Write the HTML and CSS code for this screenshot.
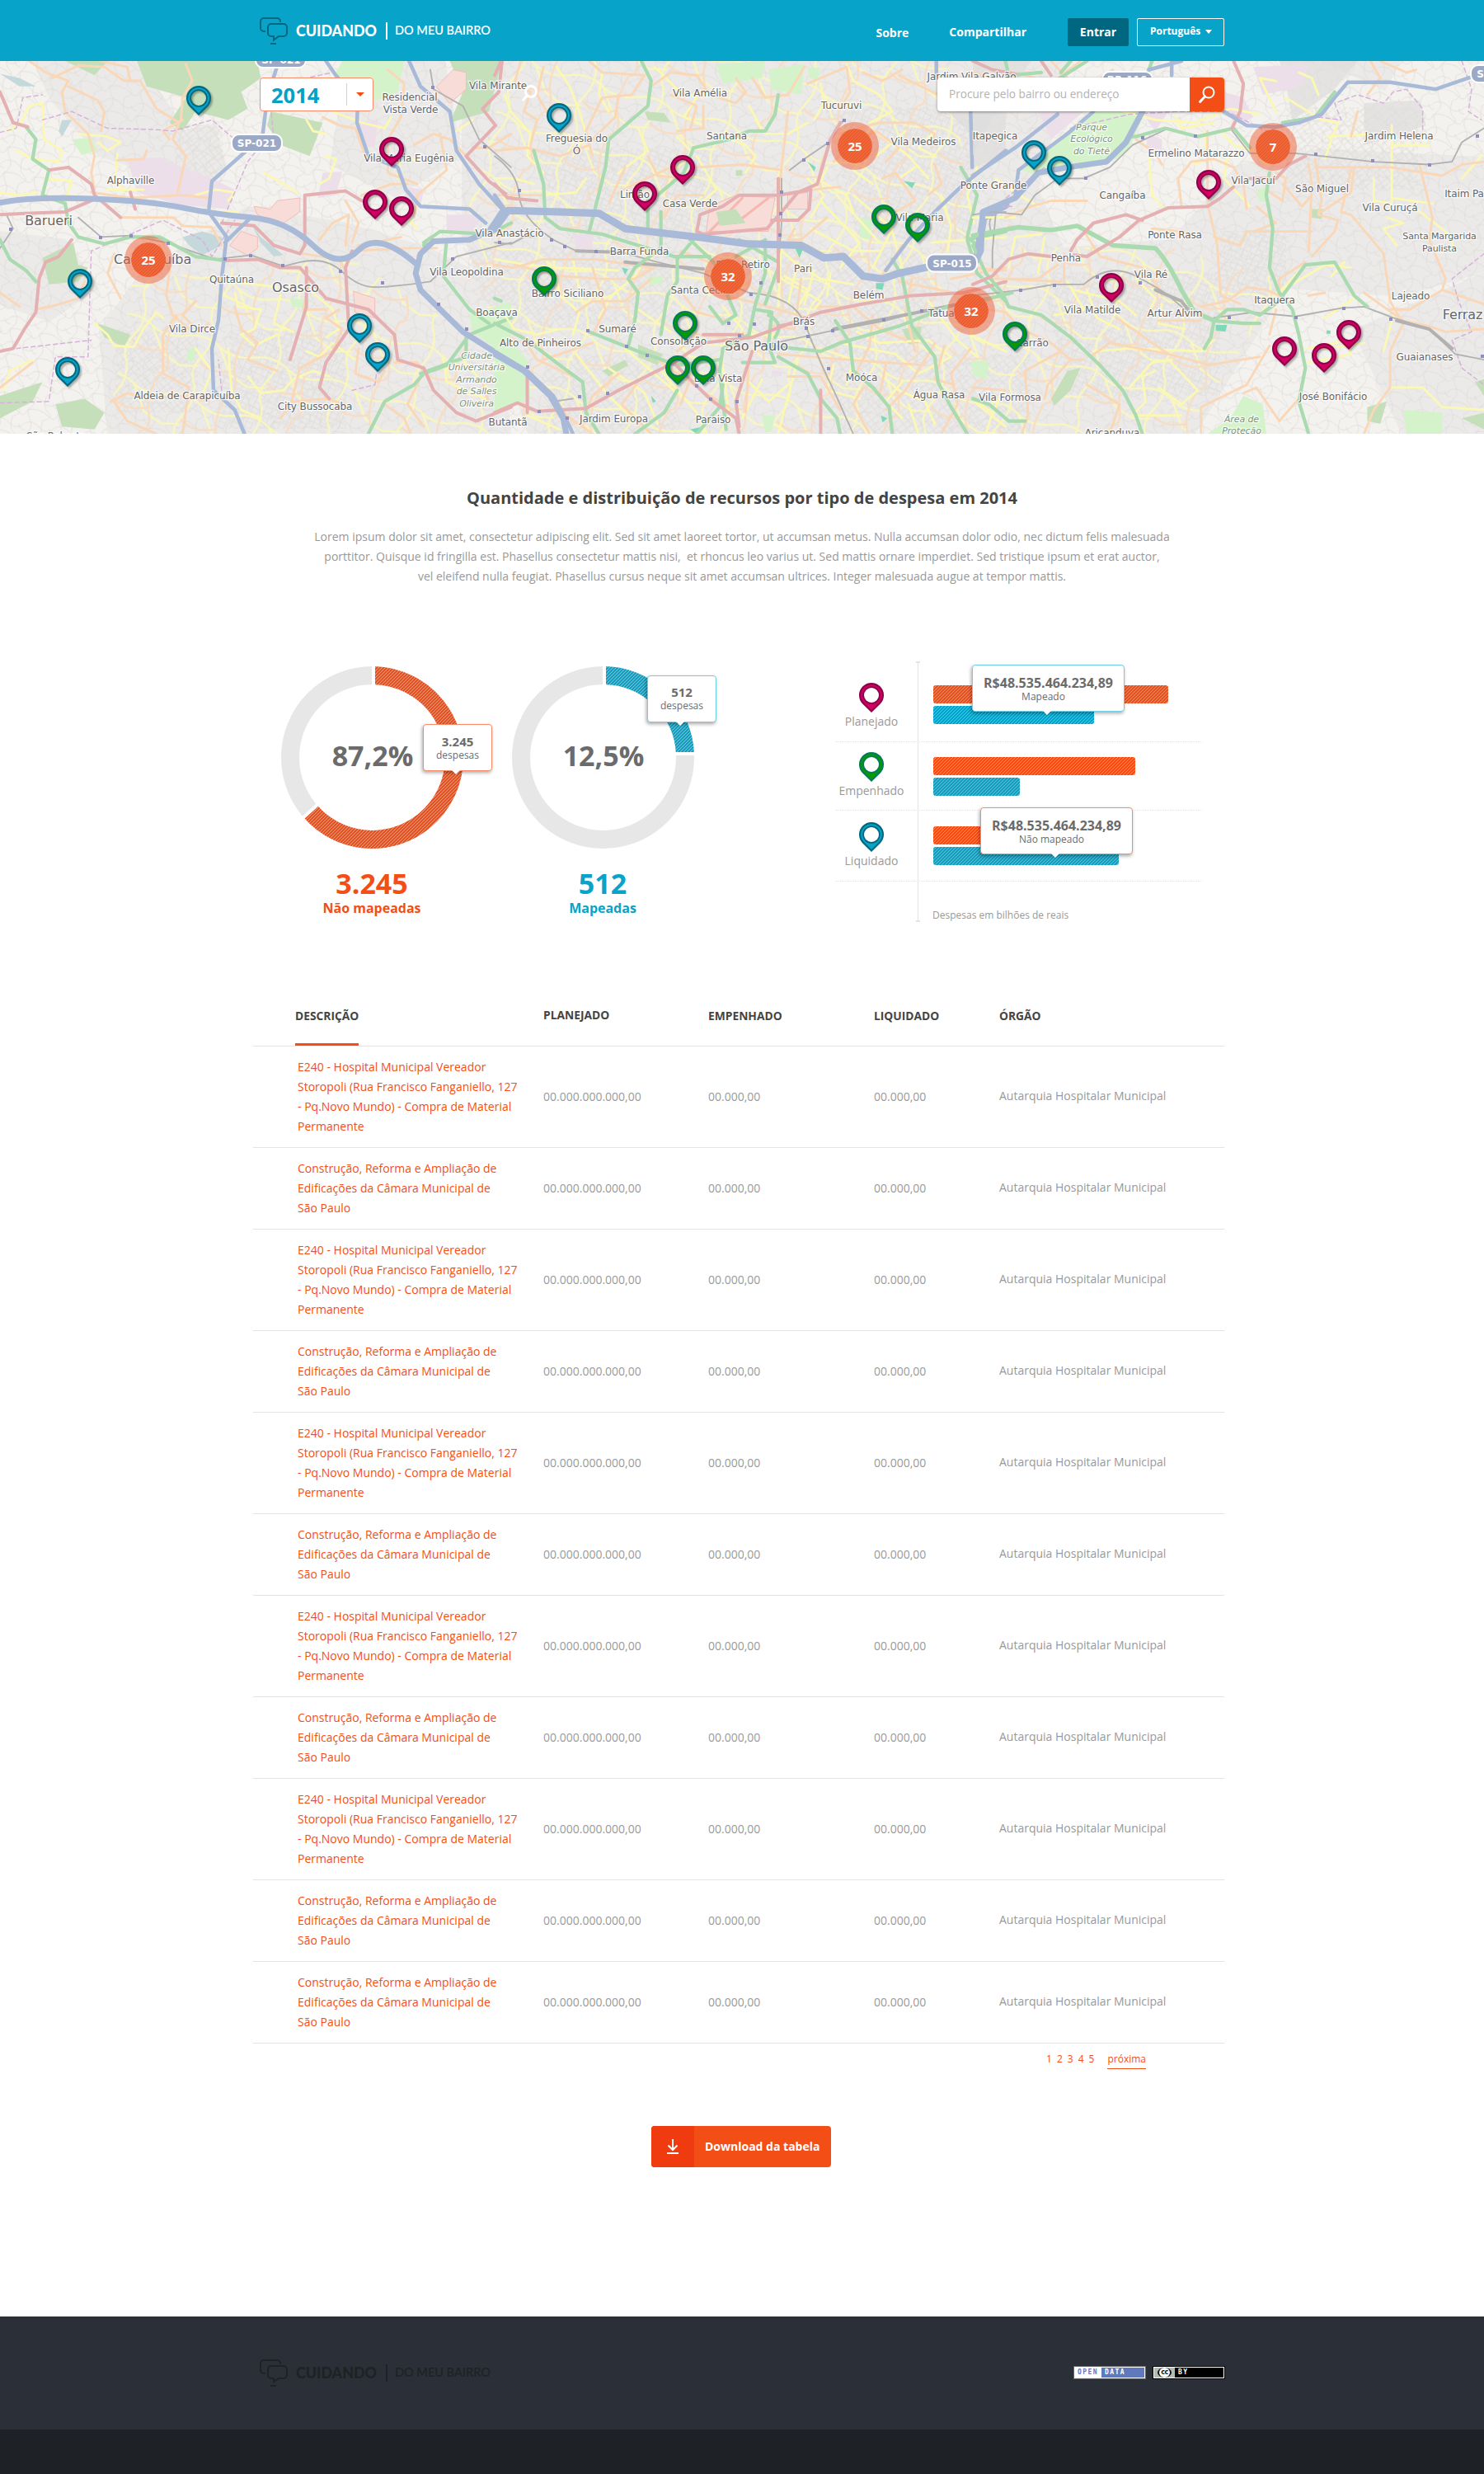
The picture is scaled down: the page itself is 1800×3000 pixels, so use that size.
FILE: index.html
```html
<!DOCTYPE html>
<html lang="pt-BR">
<head>
<meta charset="utf-8">
<title>Cuidando do Meu Bairro</title>
<link rel="stylesheet" href="styles.css">
</head>
<body>

<svg class="defs" width="0" height="0" aria-hidden="true">
  <defs>
    <symbol id="pin" viewBox="0 0 30 36">
      <path class="pin-edge" fill-rule="evenodd" d="M15 36 4 25.2A15 15 0 1 1 26 25.2ZM15 6a9 9 0 1 0 0 18 9 9 0 0 0 0-18Z"/>
      <path fill="currentColor" fill-rule="evenodd" d="M15 33 5.400 23.400A12.800 12.800 0 1 1 24.600 23.400ZM15 4.200a10.800 10.800 0 1 0 0 21.600 10.800 10.800 0 0 0 0-21.600Z"/>
    </symbol>
    <symbol id="logo" viewBox="0 0 284 36">
      <g class="logo-mark" fill="none" stroke-width="2">
        <path d="M25 6V5a4 4 0 0 0-4-4H5a4 4 0 0 0-4 4v8a4 4 0 0 0 4 4h2"/>
        <path d="M14 8H29a4 4 0 0 1 4 4v7a4 4 0 0 1-4 4H23L17 27.500V23H14a4 4 0 0 1-4-4V12a4 4 0 0 1 4-4Z"/>
        <path d="M13 32h7"/>
      </g>
      <rect class="logo-text" x="153" y="6" width="2" height="21"/>
      <text class="logo-text logo-strong" x="44" y="23" textLength="98" lengthAdjust="spacingAndGlyphs">CUIDANDO</text>
      <text class="logo-text logo-light" x="164" y="21" textLength="116" lengthAdjust="spacingAndGlyphs">DO MEU BAIRRO</text>
    </symbol>
    <pattern id="stripes" width="4" height="4" patternUnits="userSpaceOnUse">
      <path d="M-1 1 1-1M0 4 4 0M3 5 5 3" stroke="#fff" stroke-opacity=".5" stroke-width=".9"/>
    </pattern>
  </defs>
</svg>

<header class="topbar">
  <div class="container topbar-inner">
    <svg class="logo" width="284" height="36"><use href="#logo"/></svg>
    <nav class="nav">
      <a class="nav-link about">Sobre</a>
      <a class="nav-link share">Compartilhar</a>
      <a class="button-login">Entrar</a>
      <a class="button-lang">Português <span class="caret"></span></a>
    </nav>
  </div>
</header>

<section class="map">
  <svg class="map-canvas" width="1800" height="452" viewBox="0 74 1800 452">
    <defs>
      <pattern id="grid-a" width="15" height="13" patternUnits="userSpaceOnUse" patternTransform="rotate(24)"><path d="M0 1H15M0 7H9M1 0V13M9 3V13M12 0V7"/></pattern>
      <pattern id="grid-b" width="17" height="14" patternUnits="userSpaceOnUse" patternTransform="rotate(-38)"><path d="M0 2H17M4 8H17M3 0V14M10 2V14"/></pattern>
      <pattern id="grid-c" width="37" height="31" patternUnits="userSpaceOnUse" patternTransform="rotate(9)"><path d="M0 5Q9 1 18 9T37 5M4 0Q10 9 4 16T4 31M20 0Q17 15 25 20T20 31M0 20Q15 16 25 24T37 20M29 8Q31 15 37 14"/></pattern>
      <pattern id="avenues" class="avenues" width="86" height="74" patternUnits="userSpaceOnUse" patternTransform="rotate(18)"><path d="M0 20Q20 12 40 22T86 20M24 0Q32 20 22 40T24 74M40 22 62 50 86 58M0 58 22 52"/><path class="alt" d="M66 0Q58 30 68 50T66 74M22 46Q40 58 66 44"/></pattern>
    </defs>
    <rect class="land" y="74" width="1800" height="452"/>
    <g class="urban">
      <path d="M40 74H170L220 150 200 215 120 190 60 120ZM215 160 260 150 275 200 240 240 190 215ZM300 250 420 270 520 300 600 340 620 526H130L120 400 170 330ZM420 74H540L560 190 480 240 400 200ZM560 74H1130V526H640L600 400 560 280Z"/>
      <path d="M1130 74H1300L1260 230 1290 300 1420 290 1500 200 1600 180 1800 190V330L1700 360 1560 350 1450 526H1130Z"/>
      <path d="M0 280 80 290 120 350 60 390 0 370ZM1640 400 1800 330V526H1700ZM1600 74H1700L1680 110Z"/>
    </g>
    <rect class="streets" y="74" width="1800" height="452" fill="url(#grid-c)"/>
    <g class="streets-fill">
      <path fill="url(#grid-a)" d="M640 180H870V290H690ZM1000 130H1180V290H1040ZM280 400H420V520H260ZM1260 330H1480V480H1300ZM1480 280H1560V360H1480Z"/>
      <path fill="url(#grid-b)" d="M850 300H1130V430H900ZM560 300H820V400H600ZM210 150H270V230H215ZM1560 130H1720V230H1560ZM140 400H240V500H140ZM1000 430H1250V526H1020ZM660 430H820V526H660Z"/>
    </g>
    <path fill="url(#avenues)" d="M160 340 420 310 560 400 600 526H130ZM620 74H1150L1180 260 1150 526H640L600 400 560 280ZM1200 300 1420 300 1560 340 1440 526H1150Z"/>

    <g class="roads" transform="matrix(.3954 0 0 .3381 0 0)">
      <path class="forest" d="M420 219H790L800 280 740 330 760 390 700 430 600 400 560 470 520 440 570 350 450 310ZM300 1160 400 1200 380 1245 320 1210ZM130 925 225 870 240 950 270 960 240 1010 150 1020ZM170 1450 260 1430 320 1480 290 1540 190 1530ZM0 1420 130 1370 100 1440 0 1500ZM830 400 990 440 950 560 860 520 820 450ZM1380 219H1540L1500 400 1380 440 1420 330ZM200 219 330 219 290 270Z"/>
      <path class="park" d="M1050 219H1240L1220 330 1130 370 1060 350 1030 260ZM220 500 280 495 300 540 250 555ZM1440 1130 1568 1080V1290L1450 1190ZM580 1250 605 1245 590 1300 570 1290ZM890 1070 950 1075 940 1105 895 1100Z"/>
      <path class="industry" d="M390 570 490 565 560 600 650 640 720 680 700 750 550 735 420 690ZM990 620 1050 615 1030 700 975 710ZM1240 670 1300 680 1290 740 1250 730ZM1370 770 1480 770 1440 850 1370 830ZM1100 440 1160 430 1150 520 1120 530Z"/>
      <path class="military" d="M780 740 830 750 850 720 920 710 920 760 870 800 820 790 790 770ZM705 880 740 830 790 850 790 890 760 915ZM1340 310 1390 250 1430 260 1430 320 1380 370ZM1085 1045 1150 1070 1150 1140 1090 1120Z"/>
      <path class="water" d="M560 850 620 830 680 850 680 880 620 915 580 880ZM770 800 800 850 870 915 840 920 800 870ZM0 265 60 280 110 310 60 310ZM190 430 220 430 190 490 180 470Z"/>
      <g class="yellow">
        <path d="M20 470 60 450 90 380 130 370 135 500 190 540 180 580 100 570 50 540M240 480 330 490 370 510 330 540 300 510M360 550 355 630 380 690M330 680 440 680M660 640 700 600 740 560M520 740 620 760 730 760M600 700 660 680 720 690 700 720M0 690 60 700 110 690M810 620 870 660 910 690M980 660 1010 640 1030 570 1000 560M940 430 960 470 1000 480"/>
        <path d="M290 1160 330 1200 350 1240 410 1245 440 1180 480 1120 500 1140M720 1050 730 1100 800 1110 780 1180 740 1200 780 1240 850 1200M650 1000 850 1030M670 1050 780 1110M860 1060 840 1160 900 1190M960 1050 1020 1110 1040 1180 1000 1210M1090 1290 1020 1230 980 1280 940 1260M760 1350 800 1410 870 1400 900 1360 960 1330 1010 1350M620 1420 650 1330 600 1250M700 1250 710 1400 740 1470 800 1500M1290 580 1230 560 1220 640M1280 820 1250 780M1360 1290 1370 1370 1430 1400 1490 1430M1420 1290 1500 1400 1568 1420M100 1290 30 1330 10 1400M1020 400 1110 440 1180 460 1200 420M140 640 220 650 200 720M1450 430 1400 470"/>
      </g>
      <g class="orange">
        <path d="M90 219 140 260 210 290 190 330 200 400 270 480 290 560 280 620 290 680M160 280 240 235 320 240 380 290 430 290 480 390 550 440 530 500 570 560 545 690M210 310 300 360 320 400 310 470M280 690 400 710 560 700 640 710M360 575 440 570 450 540M370 780 530 780 560 810 650 815 680 880M520 500 500 470 560 430M400 290 390 240 310 219M570 230 590 290 560 350 555 430"/>
        <path d="M990 420 1040 450 1090 460 1120 560 1190 590M1190 250 1240 300 1230 420 1190 500 1190 620 1280 660M1270 520 1330 480 1380 500 1430 560M1350 480 1370 610 1280 700 1270 780M1110 700 1200 660 1250 660M1060 720 1100 800 1080 870M980 860 1020 800 1070 770 1060 880M930 910 1040 930 1060 970M1080 900 1260 890 1340 890M1230 850 1150 870 1100 880M490 880 520 970 510 1060 530 1130 580 1180M350 910 330 980 370 1070M0 1050 60 1100M110 1110 170 1095 240 1070 260 1010M540 1130 500 1200 500 1340 580 1390 560 1556M600 1080 560 1130 610 1190 640 1160M720 1100 740 1180 790 1230 760 1290 850 1330M1040 1110 1000 1140 1050 1180 1020 1260 920 1320 890 1460M860 1500 900 1440 1000 1430 1060 1450M340 1440 390 1410 450 1430 560 1420 640 1440M350 1440 390 1510 480 1556M0 1390 100 1300M1100 1250 1090 1340 1160 1370 1180 1330M1210 1300 1280 1300 1300 1330M1180 1450 1240 1500 1260 1556M1480 1370 1500 1450M1300 1330 1250 1450 1300 1530M950 1000 930 1110 1000 1110M1568 480 1500 530 1450 530"/>
      </g>
      <g class="boundary">
        <path d="M0 475 50 460 70 350 130 340M130 430 220 400 330 460 480 465 530 470 650 430 720 500M680 800 760 580 800 520M840 500 830 380 860 300 1020 260M0 1445 150 1440 170 1280 270 1280 280 900 500 790 620 860 650 920 720 790M50 1250 280 1220M680 1400 670 1290M1080 1400 1150 1380 1160 1300"/>
      </g>
      <g class="rail">
        <path d="M240 780 310 850 400 845 510 870 660 930 770 915 870 955 920 940Q1000 920 1050 975T1150 1030T1320 1010L1400 920 1568 870M1320 250 1330 320 1420 380 1470 500 1568 600M0 890 40 820 20 770"/>
      </g>
      <g class="green">
        <path d="M80 455 110 500 100 570 150 610 130 700 200 730 210 800 240 850 320 875 400 850 490 850 600 920 690 935M0 860 30 930 80 970 110 1010M1300 880 1370 860 1360 990 1440 1110 1500 1160M1568 1140 1440 1200 1370 1310 1300 1340 1270 1380 1180 1440 1130 1556M1290 1340 1430 1280 1430 1200M1300 870 1350 830 1500 840 1568 800"/>
      </g>
      <g class="red">
        <path d="M0 330 40 440 85 455M150 610 210 600 280 660 290 700 370 780M0 770 80 765 200 760 280 720M220 860 180 920 140 940 120 1000 110 1120 75 1180 40 1250 0 1260M680 800 780 810 840 880 920 910 935 880 935 700 1060 685 1110 720M690 935 790 930 860 960 920 960 1000 1070 1130 1110 1210 1200 1220 1290 1300 1320 1330 1400 1400 1480 1460 1510 1568 1460M1080 900 1060 960 1070 1180 1000 1300 980 1390 1010 1430M940 960 940 1100 890 1290M1540 219 1530 330 1480 390 1520 450 1430 560 1500 650 1568 710M400 690 415 750"/>
      </g>
      <g class="blue">
        <path class="wide" d="M0 727Q100 705 280 713T560 745 770 780 960 880 1100 897 1280 950"/>
        <path d="M855 219 820 350 805 490 650 650 640 760 695 850 680 1000 670 1150 650 1250 655 1400 720 1470 750 1556M770 780 690 870M1000 219 1030 270 1098 360 1095 440 1130 560 1220 600 1245 680 1290 740 1440 750 1490 800M1255 219 1290 310 1380 400 1400 540 1470 660 1540 750 1568 760"/>
        <path class="wide" d="M1540 760 1500 830 1440 860 1330 865 1290 910 1275 980 1290 1040 1420 1190 1568 1300"/>
      </g>
    </g>

    <g class="roads" transform="matrix(.3954 0 0 .3381 600 0)">
      <path class="forest" d="M460 400 520 405 540 440 470 430ZM440 1235 515 1270 500 1310 440 1280ZM1250 1180 1310 1170 1300 1230 1270 1235ZM330 1330 400 1290 410 1310 350 1350ZM740 610 760 610 760 630 740 630Z"/>
      <path class="park" d="M680 230 830 219 820 280 700 300ZM840 250 950 230 940 340 850 320ZM0 1160 100 1290 110 1430 0 1480ZM960 240 1000 245 990 290 965 280ZM1460 1300 1510 1290 1510 1360 1470 1350ZM470 990 520 990 510 1020 470 1020ZM1120 780 1160 790 1150 860 1120 850ZM820 1490 860 1490 850 1550 830 1550Z"/>
      <path class="teal" d="M920 885 945 895 935 925ZM1170 1015 1195 1015 1190 1040 1170 1035ZM1255 650 1290 655 1280 675ZM390 960 410 965 400 985ZM960 580 985 600 980 615ZM600 1540 640 1530 620 1556ZM1185 1490 1205 1500 1190 1515ZM480 1420 495 1440 485 1445Z"/>
      <path class="military" d="M660 740 740 700 860 710 840 830 650 830ZM900 700 960 690 960 750 900 750Z"/>
      <path class="runways" d="M660 830 760 710M740 800 840 710"/>
      <path class="forest" d="M680 760 740 750 770 800 690 810Z"/>
      <path class="industry" d="M240 840 300 840 300 890 250 890ZM850 1330 880 1330 880 1350 850 1350Z"/>
      <path class="gray" d="M1390 400 1568 400V560L1470 600 1460 480Z"/>
      <g class="yellow">
        <path d="M30 340 50 400 110 480 100 560 150 620M190 240 230 310 260 400 280 480 240 560M330 260 320 340 350 400M490 240 560 320 620 350 580 420 640 450M600 560 560 600 520 690M800 430 830 480 900 480 960 440M1000 300 1010 370 980 430M1080 230 1100 290 1180 340 1220 400 1150 440M620 560 680 680 640 720M560 490 600 540 580 640M0 640 60 640 120 660M1020 600 1000 650 1080 700 1100 760M1130 560 1100 610 1160 660M700 490 770 520 800 560 770 620M1180 480 1270 560 1330 640M1260 470 1170 560M1290 600 1240 640M820 470 800 420 780 380M1350 470 1300 530 1350 560M150 700 250 690 280 640M440 460 470 540 380 620M0 930 100 950 200 960 380 970M180 930 200 1060 260 1120 240 1200"/>
        <path d="M240 930 270 1090 360 1060M480 900 430 990 360 1060 320 1140M560 990 640 1000 660 1060M700 1100 760 1180 740 1240M860 880 920 940 1000 1000 1100 1020M880 1000 1000 1080 980 1110M960 640 1010 700 970 780M1000 720 1120 870 1060 960M1050 700 1180 870M970 820 1100 900 1180 900M1100 700 1220 820 1160 960M1220 830 1250 960M880 860 870 1100M890 990 960 1040 920 1120M930 940 900 1090M980 970 950 1090M1030 980 1020 1060M440 1110 540 1190M760 1200 860 1200M550 1210 600 1280 700 1290M510 1330 620 1480 650 1556M400 1250 560 1410M350 1320 460 1410 500 1520M250 1270 350 1420 420 1500M100 1490 200 1540M700 1320 720 1500 690 1556M820 1360 760 1500M780 1370 840 1440 900 1380M930 1290 900 1420 870 1556M1080 1380 1100 1290 1000 1250M1060 1230 1230 1270 1300 1340 1400 1280M1110 1190 1180 1230 1330 1220 1400 1280M1040 1310 1020 1400 1120 1430M1180 1340 1240 1400 1320 1440 1350 1520M1330 1080 1420 1220 1480 1280M1250 1370 1200 1440 1250 1500M1480 1100 1460 1200 1568 1260M1480 600 1450 700 1470 800M1370 700 1400 810 1390 900M1340 870 1568 850M30 1130 60 1180 130 1200 200 1180M860 1520 900 1556M1270 1450 1300 1556M1480 1450 1568 1530"/>
      </g>
      <g class="orange">
        <path d="M80 219 60 300 110 330 90 400 130 430 110 520M150 240 130 340 160 400M0 540 100 530 200 560 290 520M290 219 330 260 460 270 420 340 330 350 280 470 300 560M380 340 370 420 300 500M480 310 540 260 620 270 660 340 740 370 770 330 740 280M540 340 620 380 600 460M640 380 640 460 560 470M790 280 830 350 900 340 950 240M620 600 760 590 880 610M960 300 1080 240 1090 330 1060 390M1250 250 1190 290 1130 260M1240 270 1360 340 1400 330 1480 260M1060 480 1180 440 1290 440 1350 480 1340 530M900 400 880 600 870 740M1120 500 1170 470 1240 530 1200 580M1190 640 1230 620 1290 720 1230 760M1040 580 1090 520M980 680 1060 670M1330 700 1370 660 1350 590M640 700 560 700 520 780M470 560 500 630 580 640M400 600 350 730M0 700 150 700M380 690 430 660 540 600"/>
        <path d="M0 950 60 960 150 930 310 930 480 960M60 950 200 990 330 1000 430 1000M300 960 340 1110 300 1200M430 1000 490 960M250 1120 300 1080 400 1080 480 1000M570 900 700 960 750 1040M580 1060 620 1120 720 1150M660 1050 780 1080 960 1140M560 1260 620 1200 700 1210 750 1230M870 870 960 880 1020 920M1000 1100 1100 1100 1180 1180 1260 1220M870 1270 1080 1290 1200 1300 1320 1310M850 1170 920 1180M940 1000 920 1180M1020 780 940 860 900 860M1160 1130 1150 1240 1100 1360M1280 1000 1260 1120 1290 1260M1350 1230 1320 1290 1260 1400 1200 1470M1460 1250 1400 1340 1420 1450 1370 1556M1400 1000 1568 960M1240 1010 1450 1060M1470 960 1568 970M80 1200 130 1290 240 1350M150 1290 300 1230M170 1400 220 1490 300 1556M380 1340 300 1420 280 1480M440 1370 390 1450 480 1556M500 1290 660 1420 720 1460M620 1300 570 1450M780 1300 770 1480M900 1350 1000 1350 1060 1470M980 1240 1020 1360M1130 1390 1100 1450 1150 1556M1200 1310 1180 1420M1250 880 1180 1000M920 820 900 860M1380 1240 1350 1360 1410 1380"/>
      </g>
      <g class="rail">
        <path d="M0 560Q70 620 75 700T180 860L250 900 390 905 500 940 640 980 780 1050Q920 1060 955 1170T1040 1400L1100 1556M880 640V800L870 960M905 610 950 570 1025 510 1070 430M0 870 50 875 90 850 130 850M1525 840Q1500 760 1568 760M180 1440 240 1430M820 1240 960 1205 1040 1185 1200 1150 1310 1115 1500 1070 1568 1060"/>
        <path class="heavy" d="M250 900 390 905M400 940 640 965M1040 1180 1430 1090"/>
      </g>
      <g class="green">
        <path d="M450 219 480 290 470 380 350 500 340 600 310 740 290 830M870 340 860 410 830 470 780 470 720 500 610 530 580 620 500 700M470 710V820M510 760V890L430 960 410 1000 440 1050 430 1150 410 1240M120 540 150 660 155 780 200 820 330 840 550 920 660 920M610 860 560 930 560 1010 530 1060 510 1200M600 860 680 950 700 1020 740 1130 700 1160 660 1100M750 860 870 940M740 920 830 860 830 980 800 1090 780 1200 700 1250 690 1330 710 1540M800 1110 850 1120 840 1240 860 1300 760 1300M840 1130Q890 1160 860 1210M870 960 830 1090M840 1240 1000 1260 1060 1230 1240 1170 1390 1100M1045 1150 1090 1230 1100 1330 1160 1390 1210 1460 1220 1556M870 1280 960 1340 1000 1430 1050 1500 1060 1556M1220 930 1250 990 1280 1170 1350 1280 1360 1370 1400 1460 1450 1556M1450 860 1568 830M1450 860 1480 980 1568 1080M1430 600 1480 700 1450 850 1490 890M290 1190 440 1260 560 1310 690 1290M0 1160 100 1220 200 1310 270 1370 280 1480 320 1556M560 1400 520 1480 430 1556M700 1380 690 1460 620 1556M0 1070 20 1080"/>
      </g>
      <g class="red">
        <path d="M0 660 40 710 130 720M20 219 0 270M1060 440 1030 500 990 660 930 690 880 760 835 820 640 840 620 830 630 770 700 740 750 700 870 700 970 680 965 750 930 790 850 790M870 640 870 1010M0 1480 70 1445 130 1475 280 1465 380 1400 550 1300 640 1230 790 1210 1000 1120 1130 1090 1280 1060 1440 1050 1568 1010M540 1290 590 1350 660 1430 740 1500 750 1556M790 1260 740 1440 750 1530M870 1170 960 1150M100 1340 100 1480M1000 1400V1556M640 1200 760 1200"/>
      </g>
      <g class="blue">
        <path class="river" d="M0 820 40 755 200 760 320 765 400 820 620 850 780 875 940 880 1010 925 1070 920 1130 990 1190 1000 1240 980 1360 950 1480 920 1500 780 1568 735"/>
        <path d="M0 700 30 750M1200 970 1270 860 1350 760 1430 670 1568 540M1355 219V270M1460 400 1465 600M0 1260 100 1330 180 1420 230 1530 240 1556"/>
        <path class="wide" d="M0 1270 90 1330 170 1420 210 1500 220 1556"/>
      </g>
    </g>

    <g class="roads" transform="matrix(.3954 0 0 .3381 1180 0)">
      <path class="gray" d="M0 219H180L140 280 60 420 0 560ZM940 219 1180 219 1110 320 980 430 960 300ZM1200 370 1370 360 1390 450 1290 490 1200 520Z"/>
      <path class="industry" d="M540 480 580 500 580 540 530 530ZM740 320 830 350 860 420 830 440 740 400ZM200 400 340 400 240 500ZM860 240 1030 230 1010 310 890 340ZM520 410 600 400 560 470Z"/>
      <path class="park" d="M380 400 530 400 480 530 440 570 330 610 310 580 200 630 150 610Z"/>
      <path class="park" d="M830 1420 890 1450 900 1556H720L790 1500ZM1320 1470 1440 1480 1440 1556H1330ZM870 680 900 670 910 720 880 725ZM0 1290 50 1310 40 1350 10 1350Z"/>
      <path class="forest" d="M290 1330 330 1320 300 1400 250 1455 240 1430ZM1210 1460 1270 1440 1250 1520 1210 1510ZM1040 750 1075 750 1070 785 1040 780ZM1500 1500 1568 1480V1540ZM1540 1370 1568 1360V1420Z"/>
      <path class="teal" d="M745 1165 780 1165 775 1190 745 1185ZM1085 1185 1097 1185 1097 1197 1085 1197Z"/>
      <g class="yellow">
        <path d="M280 340 400 380 560 430 680 440 790 390 880 410M620 420 640 460 740 440M760 470 800 520 860 540 900 590M930 400 880 280 930 290M960 350 1070 430 1120 440 1100 500 1080 570M1000 260 1040 280 1060 340M1090 490 1230 480M1285 450 1285 720M1285 520 1400 520M1285 710 1410 730M1270 780 1320 800 1260 820 1300 880M1350 740 1460 840 1480 900M1230 640 1230 720 1285 730M780 560 770 640 850 740M710 470 720 570 680 590M540 560 550 700 580 740M0 780 130 780M70 640 130 690 200 740M210 840 130 850 110 960M220 850 200 980M350 1040 380 1140 450 1180M310 1040 450 1080 500 1130M290 1010 340 1110 250 1130M500 1000 560 1070 540 1120M580 1090 570 1160 650 1180M610 1290 550 1300 480 1390M560 1330 520 1350 530 1440 490 1490 640 1490M600 1290 690 1400 640 1450 570 1390M1010 1250 1080 1250 1200 1230M1030 1300 1160 1270 1150 1220 1030 1250M1140 940 1100 990M920 1060 1080 950 1160 960M1170 1070 1080 1140M1260 1260 1290 1130M1020 950 930 1060M1280 1390 1380 1390 1440 1460 1568 1470M1560 560 1500 640M0 1430 60 1480 40 1556M90 1400 60 1490M370 1260 480 1250 700 1260 740 1220"/>
      </g>
      <g class="orange">
        <path d="M0 260 120 300 100 360M240 219 330 330 430 250M140 260 240 300 330 219M500 500 560 550 580 590M640 740 630 640 670 580 740 570 800 600 830 660 840 750M720 470 720 730 750 880 760 1060 820 1090M740 850 820 880 840 830 1040 830M550 820 640 830 700 850M100 780 180 740 240 720 350 720M110 810 220 830M330 810 390 920 520 960 570 1030 580 1060M280 910 280 1020M60 960 80 1000 270 1010M30 1000 200 1000 260 950M700 1100 780 1080 840 1030 900 1040 940 1060M900 680 950 720 960 640 930 620M950 660 1010 740 1040 700M1030 590 1040 660 1030 900M1050 570 1070 720 1060 770 1120 790 1110 830 1040 920M1070 760 1160 690 1170 600M1060 600 1280 600 1440 630 1500 590 1568 580M1160 610 1130 760 1160 770 1260 910 1280 1080 1320 1160 1280 1260 1280 1390 1230 1470 1200 1556M1370 590 1410 780 1400 860 1450 1000 1440 1040 1340 1110 1280 1110M1220 219 1250 280 1210 340M1250 219 1330 260 1360 250M1440 1040 1568 1090M1200 1050 1320 1150 1400 1170 1450 1190 1568 1180M940 1070 940 1000 1020 940M1030 1060 1080 1050M60 1060 30 1100M0 1100 100 1120 150 1180 240 1230 300 1290 340 1290M300 1290 230 1380 220 1430M270 1260 160 1330 170 1490 150 1556M360 1280 420 1230 600 1270 730 1310M440 1140 600 1270M570 1150 700 1150M350 1380 450 1450 420 1556M830 1410 870 1390 940 1510 1000 1430M720 1310 880 1280M700 1556 700 1460 840 1380 910 1240M0 1390 100 1400M930 1110 910 1200M870 740 930 800 860 830M1180 400 1160 490"/>
      </g>
      <g class="boundary">
        <path d="M120 740 70 740 220 600M300 460 480 410 620 400 780 400 900 470 1060 420M1060 420 1130 430 1110 370 1180 340 1260 370 1290 330 1330 320 1380 390 1380 480 1320 480M1500 219 1530 320 1520 400 1560 430M1568 910 1470 1000 1490 1080 1530 1190 1470 1220M1470 1220 1500 1320 1568 1380"/>
      </g>
      <g class="rail">
        <path d="M0 770 60 760 150 770 190 700 260 640 340 640 420 600 490 520 600 460 680 490 790 460 850 550 990 550 1230 580 1400 590 1470 580 1500 510 1568 460M0 1060 150 1040 250 1020 340 1020Q420 940 500 990T600 1060 650 1110M740 1140 860 1120 990 1135 1130 1105 1200 1100 1290 1140 1400 1180 1480 1270 1568 1290M70 770 60 900 60 960"/>
        <path class="heavy" d="M560 1040 640 1080 660 1110M1300 1150 1400 1180 1470 1250"/>
      </g>
      <g class="green">
        <path class="wide" d="M0 845 140 815 240 825 320 810 430 880 560 890Q600 940 640 1040L680 1120 740 1150"/>
        <path d="M100 219 110 270 210 260M240 300 350 219M270 260 300 219M480 490 500 490 590 460 690 490 800 460 850 530M910 620 900 700 920 820 910 960 940 1050 980 1110 1000 1200 1020 1320 1000 1440 1030 1556M950 1060 1020 950 1110 940 1170 1060 1210 1100M740 1150 780 1110 830 1110 880 1130 940 1080M740 1150 830 1160 880 1160M740 1150 730 1210 710 1250M0 880 40 980 90 1050 110 1100 210 1130 300 1210 390 1310 460 1400 500 1490 520 1556M950 440 1050 420 1110 330M20 1080 120 1050M0 1430 50 1450 110 1510 160 1510M550 219 530 280 400 280"/>
      </g>
      <g class="red">
        <path d="M0 219 60 250 130 265M210 219 240 270M800 219 830 300 820 400 795 460M1020 560 970 590 930 640 850 640M800 670 760 710 720 740 600 745 510 790 450 850 350 920 310 915M520 790 470 770 370 800 320 860 300 900M240 920 170 910 110 930 60 990 0 1020"/>
      </g>
      <g class="blue">
        <path d="M0 630 130 530 260 410M130 700 140 610 290 480 370 400M540 250 640 219M610 219V270M770 400 840 450 930 455 1000 440 1070 410 1110 350 1150 295 1280 295 1420 320 1568 260"/>
        <path class="wide" d="M0 960 25 900 30 760 130 710 200 620 290 600 410 580 470 510 520 400"/>
      </g>
    </g>

    <g class="stations">
      <path d="M11 276h4v4h-4zM120 286h4v4h-4zM157 284h4v4h-4zM202 293h4v4h-4zM271 312h4v4h-4zM302 308h4v4h-4zM341 320h4v4h-4zM411 327h4v4h-4zM462 341h4v4h-4zM547 312h4v4h-4zM604 292h4v4h-4zM530 367h4v4h-4zM523 104h4v4h-4zM586 176h4v4h-4zM564 397h4v4h-4zM628 229h4v4h-4zM667 289h4v4h-4zM683 297h4v4h-4zM721 303h4v4h-4zM711 399h4v4h-4zM758 418h4v4h-4zM783 429h4v4h-4zM735 475h4v4h-4zM701 479h4v4h-4zM638 443h4v4h-4zM652 497h4v4h-4zM686 505h4v4h-4zM909 355h4v4h-4zM921 341h4v4h-4zM913 391h4v4h-4zM895 405h4v4h-4zM882 390h4v4h-4zM860 482h4v4h-4zM892 485h4v4h-4zM843 466h4v4h-4zM976 396h4v4h-4zM978 406h4v4h-4zM1003 445h4v4h-4zM1008 399h4v4h-4zM1070 386h4v4h-4zM1116 375h4v4h-4zM973 192h4v4h-4zM1002 172h4v4h-4zM1022 144h4v4h-4zM946 231h4v4h-4zM945 257h4v4h-4zM944 283h4v4h-4zM1384 165h4v4h-4zM1448 163h4v4h-4zM1315 214h4v4h-4zM1594 185h4v4h-4zM1663 193h4v4h-4zM1732 198h4v4h-4zM1790 163h4v4h-4zM1236 350h4v4h-4zM1277 344h4v4h-4zM1329 334h4v4h-4zM1381 341h4v4h-4zM1489 383h4v4h-4zM1570 383h4v4h-4zM1628 372h4v4h-4zM1685 385h4v4h-4zM1796 430h4v4h-4z"/>
    </g>
    <g class="shield">
      <rect x="281" y="163" width="61" height="21" rx="9"/><text x="311.500" y="178">SP-021</text>
      <rect x="310" y="61" width="61" height="21" rx="9"/><text x="341" y="77">SP-021</text>
      <rect x="1124" y="308.500" width="61" height="21" rx="9"/><text x="1155" y="323.500">SP-015</text>
      <rect x="1337" y="87" width="61" height="21" rx="9"/><text x="1367" y="101">BR-116</text>
      <rect x="1784" y="79" width="61" height="21" rx="9"/><text x="1815" y="94">SP-066</text>
    </g>
    <g class="labels">
      <text x="497" y="121.500">Residencial</text><text x="498" y="137">Vista Verde</text><text x="604" y="108">Vila Mirante</text>
      <text x="496" y="196">Vila Maria Eugênia</text><text x="158.500" y="223">Alphaville</text>
      <text x="281" y="343">Quitaúna</text><text x="233" y="403">Vila Dirce</text><text x="227" y="484">Aldeia de Carapicuíba</text>
      <text x="382" y="497">City Bussocaba</text><text x="566" y="334">Vila Leopoldina</text><text x="618" y="287">Vila Anastácio</text>
      <text x="602.500" y="383">Boaçava</text><text x="655.500" y="420">Alto de Pinheiros</text><text x="616" y="516">Butantã</text><text x="68" y="533">São Roberto</text>
      <text x="699.500" y="172">Freguesia do</text><text x="699.500" y="187">Ó</text><text x="849" y="117">Vila Amélia</text><text x="881.500" y="168.500">Santana</text>
      <text x="1020.500" y="132">Tucuruvi</text><text x="1178.500" y="97">Jardim Vila Galvão</text><text x="1120" y="176">Vila Medeiros</text>
      <text x="1207" y="168.500">Itapegica</text><text x="1205" y="229">Ponte Grande</text><text x="770" y="240">Limão</text><text x="837" y="251">Casa Verde</text>
      <text x="1115.500" y="267.500">Vila Maria</text><text x="775.500" y="309">Barra Funda</text><text x="901" y="324.500">Bom Retiro</text><text x="974" y="330">Pari</text>
      <text x="688.500" y="360">Bairro Siciliano</text><text x="852" y="356">Santa Cecília</text><text x="1053.500" y="362">Belém</text><text x="1149" y="383.500">Tatuapé</text>
      <text x="975" y="393.500">Brás</text><text x="749" y="402.500">Sumaré</text><text x="823" y="418">Consolação</text><text x="871" y="463">Bela Vista</text>
      <text x="1045" y="462">Moóca</text><text x="1139" y="483">Água Rasa</text><text x="1225" y="485.500">Vila Formosa</text><text x="744.500" y="512">Jardim Europa</text>
      <text x="865" y="512.500">Paraiso</text><text x="1451" y="190">Ermelino Matarazzo</text><text x="1697" y="168.500">Jardim Helena</text>
      <text x="1520" y="223">Vila Jacuí</text><text x="1603.500" y="233">São Miguel</text><text x="1792" y="239">Itaim Paulista</text><text x="1361.500" y="241">Cangaíba</text>
      <text x="1686" y="256">Vila Curuçá</text><text x="1425" y="288.500">Ponte Rasa</text><text class="small" x="1746" y="290">Santa Margarida</text><text class="small" x="1746" y="304.500">Paulista</text>
      <text x="1293" y="316.500">Penha</text><text x="1396" y="336.500">Vila Ré</text><text x="1546" y="367.500">Itaquera</text><text x="1711" y="363">Lajeado</text>
      <text x="1325" y="379.500">Vila Matilde</text><text x="1425" y="384">Artur Alvim</text><text x="1252" y="420">Carrão</text><text x="1728" y="436.500">Guaianases</text>
      <text x="1617" y="484.500">José Bonifácio</text><text x="1349" y="529">Aricanduva</text>
      <text class="city" x="59" y="273">Barueri</text><text class="city" x="185" y="320">Carapicuíba</text><text class="city" x="358.500" y="354">Osasco</text>
      <text class="city" x="917.500" y="425">São Paulo</text><text class="city" x="1774" y="387">Ferraz</text>
      <g class="nature">
        <text x="578" y="434.500">Cidade</text><text x="578" y="449">Universitária</text><text x="578" y="463.500">Armando</text><text x="578" y="478">de Salles</text><text x="578" y="492.500">Oliveira</text>
        <text x="1324" y="157.500">Parque</text><text x="1324" y="172">Ecológico</text><text x="1324" y="186.500">do Tietê</text>
        <text x="1506" y="511.500">Área de</text><text x="1506" y="525.500">Proteção</text>
      </g>
    </g>
    <g class="ghost-search"><circle cx="644" cy="111" r="6.500"/><path d="M639.500 115.500 634 122"/></g>
  </svg>

  <svg class="marker blue-pin" style="left:226px;top:30px"><use href="#pin"/></svg>
  <svg class="marker blue-pin" style="left:82px;top:252px"><use href="#pin"/></svg>
  <svg class="marker blue-pin" style="left:67px;top:359px"><use href="#pin"/></svg>
  <svg class="marker blue-pin" style="left:421px;top:306px"><use href="#pin"/></svg>
  <svg class="marker blue-pin" style="left:443px;top:341px"><use href="#pin"/></svg>
  <svg class="marker blue-pin" style="left:663px;top:51px"><use href="#pin"/></svg>
  <svg class="marker blue-pin" style="left:1239px;top:96px"><use href="#pin"/></svg>
  <svg class="marker blue-pin" style="left:1270px;top:115px"><use href="#pin"/></svg>
  <svg class="marker pink-pin" style="left:460px;top:92px"><use href="#pin"/></svg>
  <svg class="marker pink-pin" style="left:440px;top:156px"><use href="#pin"/></svg>
  <svg class="marker pink-pin" style="left:472px;top:164px"><use href="#pin"/></svg>
  <svg class="marker pink-pin" style="left:813px;top:114px"><use href="#pin"/></svg>
  <svg class="marker pink-pin" style="left:767px;top:146px"><use href="#pin"/></svg>
  <svg class="marker pink-pin" style="left:1451px;top:132px"><use href="#pin"/></svg>
  <svg class="marker pink-pin" style="left:1333px;top:257px"><use href="#pin"/></svg>
  <svg class="marker pink-pin" style="left:1543px;top:334px"><use href="#pin"/></svg>
  <svg class="marker pink-pin" style="left:1591px;top:342px"><use href="#pin"/></svg>
  <svg class="marker pink-pin" style="left:1621px;top:314px"><use href="#pin"/></svg>
  <svg class="marker green-pin" style="left:1057px;top:174px"><use href="#pin"/></svg>
  <svg class="marker green-pin" style="left:1098px;top:184px"><use href="#pin"/></svg>
  <svg class="marker green-pin" style="left:645px;top:249px"><use href="#pin"/></svg>
  <svg class="marker green-pin" style="left:816px;top:303px"><use href="#pin"/></svg>
  <svg class="marker green-pin" style="left:807px;top:357px"><use href="#pin"/></svg>
  <svg class="marker green-pin" style="left:838px;top:357px"><use href="#pin"/></svg>
  <svg class="marker green-pin" style="left:1216px;top:316px"><use href="#pin"/></svg>
  <span class="cluster" style="left:151px;top:212px">25</span>
  <span class="cluster" style="left:1008px;top:74px">25</span>
  <span class="cluster" style="left:854px;top:232px">32</span>
  <span class="cluster" style="left:1149px;top:274px">32</span>
  <span class="cluster" style="left:1515px;top:75px">7</span>

  <div class="container map-controls">
    <div class="year"><span class="year-value">2014</span><span class="year-toggle"><span class="caret"></span></span></div>
    <div class="search">
      <span class="search-field">Procure pelo bairro ou endereço</span>
      <span class="search-button"><svg width="22" height="22" viewBox="0 0 22 22"><circle cx="13" cy="8" r="6.500"/><path d="M8.500 13 2.500 19.500" stroke-linecap="round" stroke-width="3"/></svg></span>
    </div>
  </div>
</section>

<main class="container">
  <h1>Quantidade e distribuição de recursos por tipo de despesa em 2014</h1>
  <p class="intro">Lorem ipsum dolor sit amet, consectetur adipiscing elit. Sed sit amet laoreet tortor, ut accumsan metus. Nulla accumsan dolor odio, nec dictum felis malesuada<br>porttitor. Quisque id fringilla est. Phasellus consectetur mattis nisi,&nbsp; et rhoncus leo varius ut. Sed mattis ornare imperdiet. Sed tristique ipsum et erat auctor,<br>vel eleifend nulla feugiat. Phasellus cursus neque sit amet accumsan ultrices. Integer malesuada augue at tempor mattis.</p>

  <section class="charts">
    <div class="donut unmapped">
      <svg width="222" height="222" viewBox="0 0 222 222">
        <circle class="track" cx="110.500" cy="110.500" r="99.500"/>
        <path class="arc" d="M112 11A99.500 99.500 0 1 1 35.400 175.800"/>
        <path class="arc-lines" d="M112 11A99.500 99.500 0 1 1 35.400 175.800"/>
        <path class="gap" d="M112 0V24M45 167 24 186"/>
        <text x="111" y="121">87,2%</text>
      </svg>
      <div class="tooltip tip-orange"><strong>3.245</strong><span>despesas</span></div>
      <div class="total">3.245</div>
      <div class="total-label">Não mapeadas</div>
    </div>
    <div class="donut mapped">
      <svg width="222" height="222" viewBox="0 0 222 222">
        <circle class="track" cx="110.500" cy="110.500" r="99.500"/>
        <path class="arc" d="M112 11A99.500 99.500 0 0 1 210 106"/>
        <path class="arc-lines" d="M112 11A99.500 99.500 0 0 1 210 106"/>
        <path class="gap" d="M112 0V24M197 106H222"/>
        <text x="111" y="121">12,5%</text>
      </svg>
      <div class="tooltip tip-blue"><strong>512</strong><span>despesas</span></div>
      <div class="total">512</div>
      <div class="total-label">Mapeadas</div>
    </div>
    <div class="bars">
      <div class="bar-row">
        <div class="bar-name"><svg class="pink-pin" width="30" height="36"><use href="#pin"/></svg>Planejado</div>
        <div class="bar-pair"><div class="bar orange-bar" style="width:285px"></div><div class="bar blue-bar" style="width:195px"></div>
          <div class="tooltip tip-blue"><strong>R$48.535.464.234,89</strong><span>Mapeado</span></div></div>
      </div>
      <div class="bar-row">
        <div class="bar-name"><svg class="green-pin" width="30" height="36"><use href="#pin"/></svg>Empenhado</div>
        <div class="bar-pair"><div class="bar orange-bar" style="width:245px"></div><div class="bar blue-bar" style="width:105px"></div></div>
      </div>
      <div class="bar-row">
        <div class="bar-name"><svg class="blue-pin" width="30" height="36"><use href="#pin"/></svg>Liquidado</div>
        <div class="bar-pair"><div class="bar orange-bar" style="width:195px"></div><div class="bar blue-bar" style="width:225px"></div>
          <div class="tooltip tip-orange"><strong>R$48.535.464.234,89</strong><span>Não mapeado</span></div></div>
      </div>
      <div class="bars-caption">Despesas em bilhões de reais</div>
    </div>
  </section>

  <table class="expenses">
    <colgroup><col class="c-desc"><col class="c-plan"><col class="c-emp"><col class="c-liq"><col></colgroup>
    <thead><tr><th><span class="sorted">DESCRIÇÃO</span></th><th class="raised">PLANEJADO</th><th>EMPENHADO</th><th>LIQUIDADO</th><th>ÓRGÃO</th></tr></thead>
    <tbody>
      <tr><td>E240 - Hospital Municipal Vereador<br>Storopoli (Rua Francisco Fanganiello, 127<br>- Pq.Novo Mundo) - Compra de Material<br>Permanente</td><td>00.000.000.000,00</td><td>00.000,00</td><td>00.000,00</td><td>Autarquia Hospitalar Municipal</td></tr>
      <tr><td>Construção, Reforma e Ampliação de<br>Edificações da Câmara Municipal de<br>São Paulo</td><td>00.000.000.000,00</td><td>00.000,00</td><td>00.000,00</td><td>Autarquia Hospitalar Municipal</td></tr>
      <tr><td>E240 - Hospital Municipal Vereador<br>Storopoli (Rua Francisco Fanganiello, 127<br>- Pq.Novo Mundo) - Compra de Material<br>Permanente</td><td>00.000.000.000,00</td><td>00.000,00</td><td>00.000,00</td><td>Autarquia Hospitalar Municipal</td></tr>
      <tr><td>Construção, Reforma e Ampliação de<br>Edificações da Câmara Municipal de<br>São Paulo</td><td>00.000.000.000,00</td><td>00.000,00</td><td>00.000,00</td><td>Autarquia Hospitalar Municipal</td></tr>
      <tr><td>E240 - Hospital Municipal Vereador<br>Storopoli (Rua Francisco Fanganiello, 127<br>- Pq.Novo Mundo) - Compra de Material<br>Permanente</td><td>00.000.000.000,00</td><td>00.000,00</td><td>00.000,00</td><td>Autarquia Hospitalar Municipal</td></tr>
      <tr><td>Construção, Reforma e Ampliação de<br>Edificações da Câmara Municipal de<br>São Paulo</td><td>00.000.000.000,00</td><td>00.000,00</td><td>00.000,00</td><td>Autarquia Hospitalar Municipal</td></tr>
      <tr><td>E240 - Hospital Municipal Vereador<br>Storopoli (Rua Francisco Fanganiello, 127<br>- Pq.Novo Mundo) - Compra de Material<br>Permanente</td><td>00.000.000.000,00</td><td>00.000,00</td><td>00.000,00</td><td>Autarquia Hospitalar Municipal</td></tr>
      <tr><td>Construção, Reforma e Ampliação de<br>Edificações da Câmara Municipal de<br>São Paulo</td><td>00.000.000.000,00</td><td>00.000,00</td><td>00.000,00</td><td>Autarquia Hospitalar Municipal</td></tr>
      <tr><td>E240 - Hospital Municipal Vereador<br>Storopoli (Rua Francisco Fanganiello, 127<br>- Pq.Novo Mundo) - Compra de Material<br>Permanente</td><td>00.000.000.000,00</td><td>00.000,00</td><td>00.000,00</td><td>Autarquia Hospitalar Municipal</td></tr>
      <tr><td>Construção, Reforma e Ampliação de<br>Edificações da Câmara Municipal de<br>São Paulo</td><td>00.000.000.000,00</td><td>00.000,00</td><td>00.000,00</td><td>Autarquia Hospitalar Municipal</td></tr>
      <tr><td>Construção, Reforma e Ampliação de<br>Edificações da Câmara Municipal de<br>São Paulo</td><td>00.000.000.000,00</td><td>00.000,00</td><td>00.000,00</td><td>Autarquia Hospitalar Municipal</td></tr>
    </tbody>
  </table>

  <nav class="pages"><a>1</a><a>2</a><a>3</a><a>4</a><a>5</a><a class="next">próxima</a></nav>

  <a class="download">
    <span class="download-icon"><svg width="14" height="18" viewBox="0 0 14 18"><path d="M7 0V13M1.500 7.500 7 13 12.500 7.500M0 17H14"/></svg></span>
    <span class="download-text">Download da tabela</span>
  </a>
</main>

<footer class="footer">
  <div class="container footer-inner">
    <svg class="logo" width="284" height="36"><use href="#logo"/></svg>
    <div class="badges">
      <span class="badge badge-data"><span class="badge-left">OPEN</span><span class="badge-right">DATA</span></span>
      <span class="badge badge-cc"><span class="badge-left"><span class="cc">cc</span></span><span class="badge-right">BY</span></span>
    </div>
  </div>
</footer>
<div class="footer-base"></div>

</body>
</html>
```
FILE: styles.css
```css
* { box-sizing: border-box; }
body { margin: 0; background: #fff; color: #999; font: 14px/24px "Open Sans", "Noto Sans", sans-serif; }
.defs { position: absolute; }
.container { width: 1170px; margin: 0 auto; }
.caret { display: inline-block; border: 4px solid transparent; border-top: 5px solid #fff; border-bottom: 0; }

/* pins */
.blue-pin { color: #07a3c8; --edge: #00697f; }
.pink-pin { color: #d10062; --edge: #8f0049; }
.green-pin { color: #0a9a00; --edge: #007d58; }
.pin-edge { fill: var(--edge); }

/* top bar */
.topbar { height: 74px; background: #07a3c8; }
.topbar-inner { display: flex; align-items: flex-start; justify-content: space-between; padding-top: 21px; }
.logo { display: block; --mark: #006780; --ink: #fff; }
.logo-mark { stroke: var(--mark); }
.logo-text { fill: var(--ink); font-family: Lato, "Open Sans", sans-serif; }
.logo-strong { font-size: 19.5px; font-weight: 900; }
.logo-light { font-size: 15.3px; font-weight: 600; }
.nav { display: flex; color: #fff; font-weight: 700; line-height: 34px; padding-top: 1px; }
.about { padding-top: 1px; margin-right: 49px; }
.share { margin-right: 50px; line-height: 33px; }
.button-login { width: 74px; height: 34px; margin-right: 10px; border-radius: 2px; background: #006780; text-align: center; line-height: 33px; }
.button-lang { width: 106px; height: 34px; border: 1px solid #fff; border-radius: 2px; padding-left: 15px; font-size: 12px; line-height: 30px; }
.button-lang .caret { margin-left: 3px; vertical-align: 1px; }

/* map */
.map { position: relative; height: 452px; overflow: hidden; }
.map-canvas { position: absolute; left: 0; top: 0; }
.land { fill: #f4f2ee; }
.urban { fill: #ebeae8; }
.map-canvas pattern path { fill: none; stroke: #dcdad7; stroke-width: .7; }
.map-canvas .avenues path { stroke: #faf7bb; stroke-width: 2.2; }
.map-canvas .avenues .alt { stroke: #f9dcc0; }
.roads path { fill: none; vector-effect: non-scaling-stroke; stroke-linejoin: round; stroke-linecap: round; }
.roads .forest { fill: #c6dfbb; }
.roads .park { fill: #d5f3cb; }
.roads .industry { fill: #ecdfe9; }
.roads .military { fill: #f8dcd8; stroke: #f5bcb8; stroke-width: 1; }
.roads .runways { stroke: #f6b7ae; stroke-width: 3; }
.roads .water { fill: #c5d8dc; }
.roads .teal { fill: #7fd9b9; }
.roads .gray { fill: #dedddd; fill-opacity: .7; }
.yellow path { stroke: #fbf8b4; stroke-width: 2.8; }
.orange path { stroke: #fad7b6; stroke-width: 2.9; }
.red path { stroke: #e4b0b1; stroke-width: 4; }
.green path { stroke: #a9dab0; stroke-width: 4.2; }
.blue path { stroke: #a8bad8; stroke-width: 4.5; }
.green .wide { stroke-width: 5.5px; }
.blue .wide { stroke-width: 7px; }
.blue .river { stroke-width: 9px; }
.rail path { stroke: #b1b1b1; stroke-width: 1.8; }
.rail .heavy { stroke-width: 4px; }
.boundary path { stroke: #d6b2da; stroke-width: 1.5; stroke-dasharray: 5 4; }
.stations { fill: #8e8dc0; }
.shield rect { fill: #9ba8c6; stroke: #fff; stroke-width: 2; }
.shield text { fill: #fff; font: bold 12px "DejaVu Sans", sans-serif; text-anchor: middle; }
.labels { fill: #666; font: 12px "DejaVu Sans", sans-serif; text-anchor: middle; paint-order: stroke; stroke: #fff; stroke-opacity: .75; stroke-width: 2.5px; letter-spacing: -.1px; }
.labels .small { font-size: 11px; }
.labels .city { font-size: 16px; }
.nature { fill: #7f9479; font-size: 11px; font-style: italic; }
.ghost-search { fill: none; stroke: #fff; stroke-width: 3; }
.marker { position: absolute; width: 30px; height: 36px; overflow: visible; filter: drop-shadow(2px 2px 1px rgba(0, 0, 0, .3)); }
.cluster { position: absolute; width: 58px; height: 58px; border: 8px solid rgba(240, 98, 60, .5); border-radius: 50%; color: #fff; font-weight: 700; font-size: 15px; line-height: 42px; text-align: center; background: linear-gradient(135deg, #f2673a 42%, #e0552b 42% 58%, #f2673a 58%) 0 0 / 4px 4px padding-box; }
.map-controls { position: relative; display: flex; justify-content: space-between; padding-top: 20px; }
.year { display: flex; align-items: center; width: 138px; height: 41px; border: 1px solid #fa8b68; border-radius: 4px; background: #fff; }
.year-value { flex: 1; padding-left: 13px; color: #079fc4; font-size: 25.5px; font-weight: 700; line-height: 38px; }
.year-toggle { display: flex; align-items: center; justify-content: center; width: 32px; height: 27px; border-left: 1px solid #d0d0d0; }
.year-toggle .caret { border-width: 5px 5px 0; border-top-color: #f44e17; }
.search { display: flex; width: 348px; height: 41px; border-radius: 4px; background: #fff; box-shadow: 0 1px 3px rgba(0, 0, 0, .45); }
.search-field { flex: 1; padding-left: 14px; color: #b3b3b3; font-size: 13.6px; line-height: 40px; }
.search-button { width: 42px; display: grid; place-items: center; border-radius: 0 4px 4px 0; background: #f44e17; }
.search-button svg { fill: none; stroke: #fff; stroke-width: 2; }

/* intro */
h1 { margin: 0; padding-top: 64px; color: #444; font-size: 20px; font-weight: 700; line-height: 28px; text-align: center; }
.intro { margin: 21px 0 0; text-align: center; }

/* charts */
.charts { display: flex; align-items: flex-start; margin-top: 91px; height: 395px; }
.donut { position: relative; width: 220px; margin: 6px 0 0 26px; text-align: center; }
.donut.mapped { margin-left: 60px; }
.donut svg { display: block; }
.donut path, .donut circle { fill: none; stroke-width: 22; }
.donut .track { stroke: #e7e7e7; }
.donut .arc { stroke: currentColor; }
.donut .arc-lines { stroke: url(#stripes); }
.donut .gap { stroke: #fff; stroke-width: 4; }
.donut text { fill: #6b6b6b; font-size: 34px; font-weight: 700; text-anchor: middle; }
.unmapped { color: #f44e17; }
.mapped { color: #07a3c8; }
.total { margin-top: 22px; font-size: 34px; font-weight: 700; line-height: 39px; }
.total-label { font-size: 16px; font-weight: 700; line-height: 21px; }
.tooltip { position: absolute; height: 57px; padding-top: 12px; border: 1px solid #fa8b68; border-radius: 4px; background: #fff; color: #6b6b6b; text-align: center; box-shadow: -1px 2px 4px rgba(0, 0, 0, .35); }
.tooltip::after { content: ""; position: absolute; left: 50%; bottom: -5px; margin-left: -7px; border: 5px solid transparent; border-top-color: #fff; border-bottom: 0; }
.tip-blue { border-color: #6dcfe4; }
.tooltip strong, .tooltip span { display: block; line-height: 16px; }
.tooltip strong { font-size: 16px; font-weight: 700; }
.tooltip span { margin-top: 1px; font-size: 12px; }
.donut .tooltip { width: 84px; left: 172px; top: 70px; }
.donut .tooltip strong { font-size: 15px; }
.donut .mapped .tooltip strong, .mapped .tooltip strong { margin-top: -1px; }
.donut.mapped .tooltip { left: 164px; top: 11px; }

.bars { position: relative; width: 445px; margin-left: 172px; height: 312px; }
.bars::before { content: ""; position: absolute; left: 98px; top: 0; width: 5px; height: 312px; border: solid #e3e3e3; border-width: 2px 0; background: linear-gradient(#e3e3e3, #e3e3e3) 50% 0 / 1px 100% no-repeat; }
.bar-row { display: flex; height: 98px; border-bottom: 1px dotted #e4e4e4; padding-top: 26px; }
.bar-row:nth-child(2) { height: 83px; padding-top: 12px; }
.bar-row:nth-child(3) { height: 86px; padding-top: 14px; }
.bar-name { display: flex; flex-direction: column; align-items: center; width: 88px; margin-right: 31px; line-height: 22px; }
.bar-pair { position: relative; padding-top: 3px; }
.bar-row:nth-child(2) .bar-pair { padding-top: 6px; }
.bar-row:nth-child(3) .bar-pair { padding-top: 5px; }
.bar { height: 22px; margin-bottom: 3px; border-radius: 3px; }
.orange-bar { background: linear-gradient(135deg, #f44e17 41%, #f9906c 41% 59%, #f44e17 59%) 0 0 / 4px 4px; }
.blue-bar { background: linear-gradient(135deg, #07a3c8 41%, #62c4db 41% 59%, #07a3c8 59%) 0 0 / 4px 4px; }
.bar-pair .tooltip { width: 185px; left: 47px; top: -22px; }
.bar-pair .tip-orange { left: 57px; top: -18px; }
.bar-pair .tooltip strong { padding-top: 1px; }
.bar-pair .tooltip span { margin-right: 12px; }
.bars-caption { margin: 32px 0 0 118px; font-size: 12px; line-height: 18px; }

/* table */
.expenses { width: 1178px; margin: 0 0 0 -8px; border-collapse: separate; border-spacing: 0; table-layout: fixed; }
.c-desc { width: 352px; }
.c-plan { width: 200px; }
.c-emp { width: 201px; }
.c-liq { width: 152px; }
th { height: 71px; padding: 25px 0 0; border-bottom: 1px solid #e3e3e3; color: #444; font-size: 13.8px; font-weight: 700; line-height: 20px; text-align: left; vertical-align: top; }
th.raised { padding-top: 24px; }
th:first-child { padding-left: 51px; }
.sorted { display: inline-block; height: 46px; border-bottom: 3px solid #f44e17; }
td { padding: 13px 0; border-bottom: 1px solid #e3e3e3; vertical-align: middle; }
td:first-child { padding-left: 54px; color: #f44e17; }
td:last-child { padding-bottom: 15px; }
.pages { display: flex; justify-content: flex-end; margin: 10px 95px 0 0; color: #f44e17; font-size: 12px; line-height: 18px; gap: 6px; }
.next { margin-left: 10px; height: 21px; border-bottom: 1px solid #f44e17; }
.download { display: flex; width: 218px; height: 50px; margin: 69px 0 0 475px; border-radius: 4px; overflow: hidden; background: #f44e17; color: #fff; font-weight: 700; line-height: 50px; }
.download-icon { display: grid; place-items: center; width: 52px; background: #f03a10; }
.download-icon svg { fill: none; stroke: #fff; stroke-width: 2; }
.download-text { padding-left: 13px; }

/* footer */
.footer { height: 137px; margin-top: 181px; background: #2b2f37; }
.footer-inner { display: flex; justify-content: space-between; padding-top: 52px; }
.footer .logo { --mark: #1e2226; --ink: #1e2226; }
.footer-base { height: 54px; background: #1e2226; }
.badges { display: flex; gap: 8px; padding-top: 8px; margin-right: -1px; }
.badge { display: flex; width: 88px; height: 16px; padding: 1px; border: 1px solid #666; background: #fff; font: bold 8px/12px "DejaVu Sans Mono", monospace; letter-spacing: 1.4px; }
.badge-left { width: 32px; padding-left: 3px; color: #6079bd; }
.badge-right { flex: 1; padding-left: 4px; background: #6079bd; color: #fff; }
.badge-cc { border-color: #000; }
.badge-cc .badge-left { display: grid; place-items: center; width: 25px; padding: 0; background: #b4bbb0; }
.badge-cc .badge-right { background: #000; }
.cc { width: 17px; height: 12px; border: solid #111; border-width: 0 2px; border-radius: 50%; background: #fff; color: #111; font: bold 8px/11px "DejaVu Sans", sans-serif; letter-spacing: -.5px; text-align: center; }
```
